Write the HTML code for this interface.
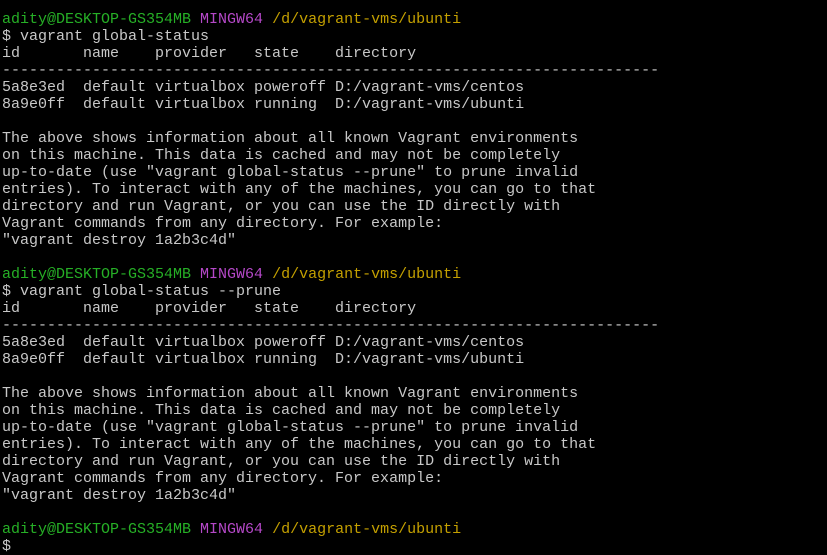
<!DOCTYPE html><html><head><style>
html,body{margin:0;background:#000;width:827px;height:543px;overflow:hidden}
pre{margin:0;position:absolute;left:2px;top:11px;font-family:"Liberation Mono",monospace;font-size:15px;line-height:17px;color:#c8c8c8;letter-spacing:0}
.g{color:#26b026}.m{color:#b548c8}.y{color:#c4a000}
</style></head><body><pre><span class="g">adity@DESKTOP-GS354MB</span> <span class="m">MINGW64</span> <span class="y">/d/vagrant-vms/ubunti</span>
$ vagrant global-status
id       name    provider   state    directory
-------------------------------------------------------------------------
5a8e3ed  default virtualbox poweroff D:/vagrant-vms/centos
8a9e0ff  default virtualbox running  D:/vagrant-vms/ubunti

The above shows information about all known Vagrant environments
on this machine. This data is cached and may not be completely
up-to-date (use "vagrant global-status --prune" to prune invalid
entries). To interact with any of the machines, you can go to that
directory and run Vagrant, or you can use the ID directly with
Vagrant commands from any directory. For example:
"vagrant destroy 1a2b3c4d"

<span class="g">adity@DESKTOP-GS354MB</span> <span class="m">MINGW64</span> <span class="y">/d/vagrant-vms/ubunti</span>
$ vagrant global-status --prune
id       name    provider   state    directory
-------------------------------------------------------------------------
5a8e3ed  default virtualbox poweroff D:/vagrant-vms/centos
8a9e0ff  default virtualbox running  D:/vagrant-vms/ubunti

The above shows information about all known Vagrant environments
on this machine. This data is cached and may not be completely
up-to-date (use "vagrant global-status --prune" to prune invalid
entries). To interact with any of the machines, you can go to that
directory and run Vagrant, or you can use the ID directly with
Vagrant commands from any directory. For example:
"vagrant destroy 1a2b3c4d"

<span class="g">adity@DESKTOP-GS354MB</span> <span class="m">MINGW64</span> <span class="y">/d/vagrant-vms/ubunti</span>
$</pre></body></html>
